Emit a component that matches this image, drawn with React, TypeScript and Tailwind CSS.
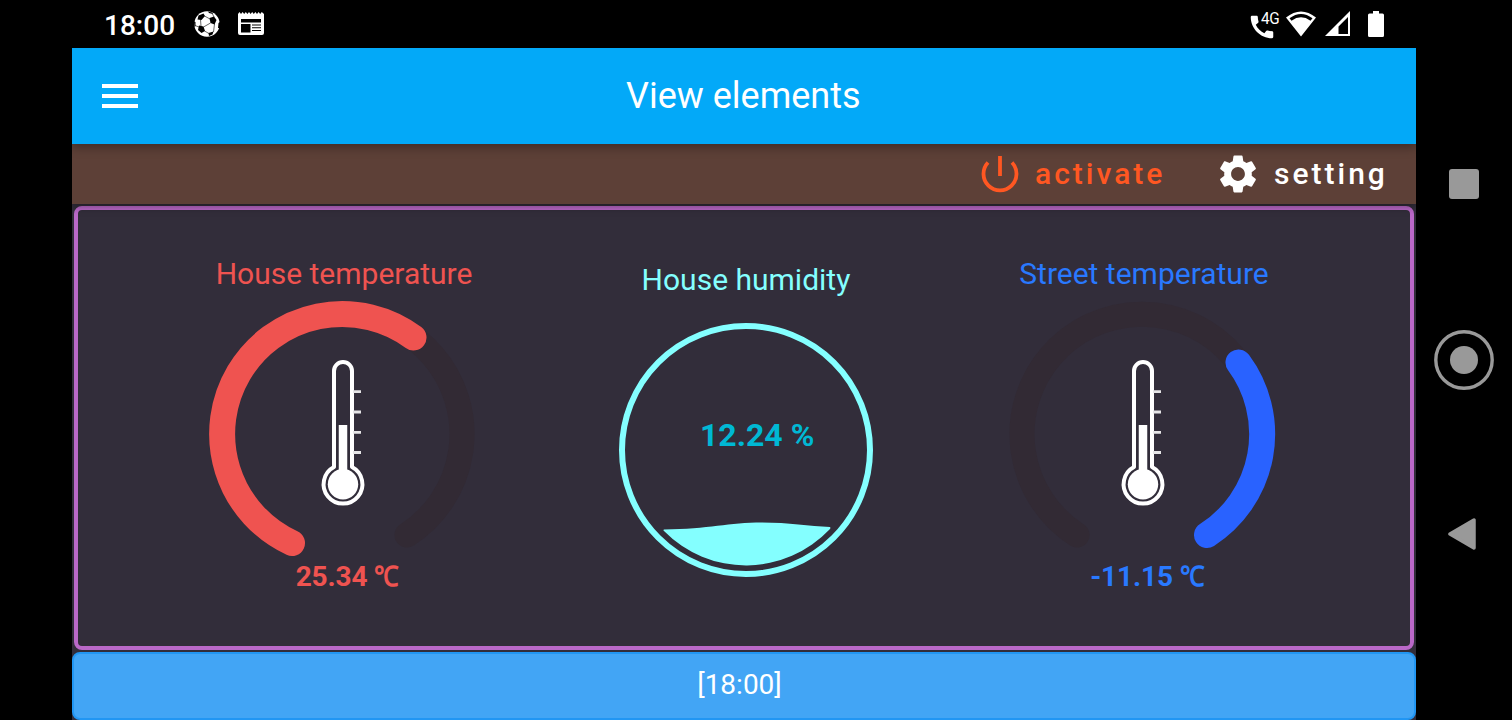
import React from "react";
import { MdMenu, MdSettings, MdCall } from "react-icons/md";

function Thermometer() {
  return (
    <g fill="none" stroke="#fff">
      <path d="M125 166V70a9 9 0 0 1 18 0V166A19.400 19.400 0 1 1 125 166Z" strokeWidth="4" strokeLinejoin="round" />
      <path d="M134 124V183" strokeWidth="8.500" />
      <circle cx="134" cy="183.300" r="15.200" fill="#fff" stroke="none" />
      <path d="M144 90.700H152M144 111H152M144 131.300H152M144 151.500H152" strokeWidth="2.800" stroke="#e6e5e7" />
    </g>
  );
}

function Gauge({ arc, color }: { arc: string; color: string }) {
  return (
    <svg width="266" height="266" viewBox="0 0 266 266" fill="none" strokeLinecap="round" className="block overflow-visible">
      <path d="M68 234A120 120 0 1 1 198 234" stroke="#322a34" strokeWidth="25" />
      <path d={arc} stroke={color} strokeWidth="26" />
      <g strokeLinecap="butt"><Thermometer /></g>
    </svg>
  );
}

function SoccerBall() {
  return (
    <svg width="26" height="26" viewBox="0 0 26 26">
      <circle cx="13" cy="13" r="12.700" fill="#fff" />
      <g fill="#000">
        <path d="M4.500 4.500L9.500 2.500 11 5 7.500 9 3.500 8.500Z" />
        <path d="M15.500 7L20 5.500 22.500 9 20.500 13.500 16.500 12Z" />
        <path d="M5 14.500L9.500 15.500 11 20 7.500 22 4 19Z" />
        <path d="M14.500 22L19.500 20.500 18.500 23.500 15 25Z" />
        <path d="M0 10.500L1.500 11 1.500 15 .5 16ZM24.500 12L26 11V17L24 17Z" />
        <path d="M14 .5L18 1.500 19 3 15 2Z" />
      </g>
      <path d="M10.500 5L16 8M6.500 8.500L7 15M9.500 16L16.500 12M20.500 13L19.500 21M10.500 20L15 22.500M20 6L18 2M1 14.500L5 16" stroke="#000" strokeWidth=".6" />
    </svg>
  );
}

function StatusBar() {
  return (
    <div className="flex h-12 items-center justify-between pl-8 pr-8 text-white">
      <div className="flex items-center">
        <span className="mt-[3px] w-[90px] text-[28px] font-medium leading-none">18:00</span>
        <SoccerBall />
        <svg width="26" height="24" viewBox="0 0 26 24" className="ml-[18px]">
          <path fillRule="evenodd" fill="#fff" d="M0 2L1.500 0 3 2 4.600 0 6.200 2 7.800 0 9.400 2 11 0 12.600 2 14.200 0 15.800 2 17.400 0 19 2 20.600 0 22.200 2 23.800 0 26 2V21a2 2 0 0 1-2 2H2a2 2 0 0 1-2-2ZM3 7V10.500H23V7ZM3 12V20.500H12.500V12ZM14 12.500V13.500H23V12.500ZM14 15.200V16.200H23V15.200ZM14 17.900V18.900H23V17.900Z" />
        </svg>
      </div>
      <div className="flex items-center">
        <div className="relative h-[30px] w-[29px]">
          <MdCall size={30} className="absolute -left-1 top-[3px]" />
          <span className="absolute left-[10px] top-[1px] origin-left scale-x-[0.9] text-[17px] leading-none tracking-[-0.5px]">4G</span>
        </div>
        <svg width="30" height="26" viewBox="0 0 30 26" className="ml-[6px]">
          <path fill="#fff" fillRule="evenodd" d="M0 6.500Q15-5.500 30 6.500L15 25.500ZM3.500 7.300L5.500 9.700Q15 3 24.500 9.700L26.500 7.300Q15-1.200 3.500 7.300Z" />
        </svg>
        <svg width="26" height="26" viewBox="0 0 26 26" className="ml-[9px]">
          <path fill="#fff" fillRule="evenodd" d="M0 25L25 0V25ZM13.500 15.500V23H23V6Z" />
        </svg>
        <svg width="16" height="26" viewBox="0 0 16 26" className="ml-[17px]">
          <path fill="#fff" d="M5 0H11V2.500H14.500A1.500 1.500 0 0 1 16 4V24.500A1.500 1.500 0 0 1 14.500 26H1.500A1.500 1.500 0 0 1 0 24.500V4A1.500 1.500 0 0 1 1.500 2.500H5Z" />
        </svg>
      </div>
    </div>
  );
}

function SystemNav() {
  return (
    <nav className="flex h-[720px] w-24 flex-col items-center pt-[169px]">
      <div className="h-[30px] w-[30px] rounded-[3px] bg-[#999]" />
      <svg width="60" height="60" viewBox="0 0 60 60" className="mt-[131px]">
        <circle cx="30" cy="30" r="28.200" fill="none" stroke="#999" strokeWidth="3.400" />
        <circle cx="30" cy="30" r="14" fill="#999" />
      </svg>
      <svg width="28" height="32" viewBox="0 0 28 32" className="mr-1 mt-32">
        <path d="M2 16L26 2V30Z" fill="#999" stroke="#999" strokeWidth="3.500" strokeLinejoin="round" />
      </svg>
    </nav>
  );
}

function Reading({ value, className }: { value: string; className: string }) {
  return (
    <p className={"mt-[-4px] flex whitespace-pre text-[28px] font-bold leading-[28px] " + className}>
      <span className="tracking-[-0.1px]">{value} </span>
      <span className="w-[25px] origin-left scale-x-[0.88]">℃</span>
    </p>
  );
}

export default function App() {
  return (
    <div className="flex h-[720px] w-[1512px] overflow-hidden bg-black pl-[72px] font-['Roboto',sans-serif]">
      <div className="flex w-[1344px] flex-col">
        <StatusBar />
        <header className="z-20 flex h-24 items-center bg-[#03a9f8] text-white shadow-[0_3px_10px_rgba(0,0,0,0.35)] [clip-path:inset(0_0_-60px_0)]">
          <MdMenu size={48} className="ml-6" />
          <h1 className="ml-[482px] whitespace-nowrap text-[36px] leading-none">View elements</h1>
        </header>
        <main className="flex h-[576px] flex-col bg-[#322d3a]">
          <div className="z-10 flex h-[60px] items-center bg-[#5d4037] text-[30px] font-medium leading-none tracking-[3px] shadow-[0_3px_8px_rgba(0,0,0,0.35)] [clip-path:inset(0_0_-60px_0)]">
            <button className="ml-[909px] flex items-center text-[#ff5722]">
              <svg width="38" height="38" viewBox="0 0 38 38" fill="none" stroke="currentColor" strokeWidth="3.800">
                <path d="M19 1V21M7 7.500a16.500 16.500 0 1 0 24 0" />
              </svg>
              <span className="ml-[16px] w-[180px] text-left">activate</span>
            </button>
            <button className="flex items-center text-white">
              <MdSettings size={46} />
              <span className="ml-[13px]">setting</span>
            </button>
          </div>
          <section className="mx-[2px] mt-[2px] flex h-[444px] rounded-lg border-4 border-[#ba68c8]">
            <div className="ml-[131px] flex w-[266px] flex-col items-center pt-[49px]">
              <h2 className="ml-1 whitespace-nowrap text-[30px] leading-[30px] text-[#ef5350]">House temperature</h2>
              <div className="mt-[12px]"><Gauge color="#ef5350" arc="M83 242A120 120 0 1 1 204.500 36.500" /></div>
              <Reading value="25.34" className="ml-[11px] text-[#ef5350]" />
            </div>
            <div className="ml-36 flex w-[254px] flex-col items-center pt-[55px]">
              <h2 className="whitespace-nowrap text-[30px] leading-[30px] text-[#84ffff]">House humidity</h2>
              <div className="relative mt-7">
                <svg width="254" height="254" viewBox="0 0 254 254" className="block">
                  <circle cx="127" cy="127" r="124" fill="none" stroke="#84ffff" strokeWidth="6" />
                  <path d="M45 206.500C90 206 110 199.500 143 199.500C170 199.500 190 203 211 204Q212 205 210.500 206.500A115 115 0 0 1 45 208Q44 207 45 206.500Z" fill="#84ffff" />
                </svg>
                <span className="absolute left-[81px] top-24 whitespace-nowrap text-[32px] font-bold leading-[32px] text-[#00b8d4]">12.24 %</span>
              </div>
            </div>
            <div className="ml-[136px] flex w-[266px] flex-col items-center pt-[49px]">
              <h2 className="ml-1 whitespace-nowrap text-[30px] leading-[30px] text-[#2979ff]">Street temperature</h2>
              <div className="mt-[12px]"><Gauge color="#2962ff" arc="M229.500 61.500A120 120 0 0 1 198 234" /></div>
              <Reading value="-11.15" className="ml-[11px] text-[#2979ff]" />
            </div>
          </section>
          <footer className="mt-[2px] flex h-[68px] items-center justify-center rounded-lg border-2 border-[#2196f3] bg-[#42a5f5] text-[28px] leading-none text-white">
            <span className="mb-[3px] mr-[9px]">[18:00]</span>
          </footer>
        </main>
      </div>
      <SystemNav />
    </div>
  );
}
